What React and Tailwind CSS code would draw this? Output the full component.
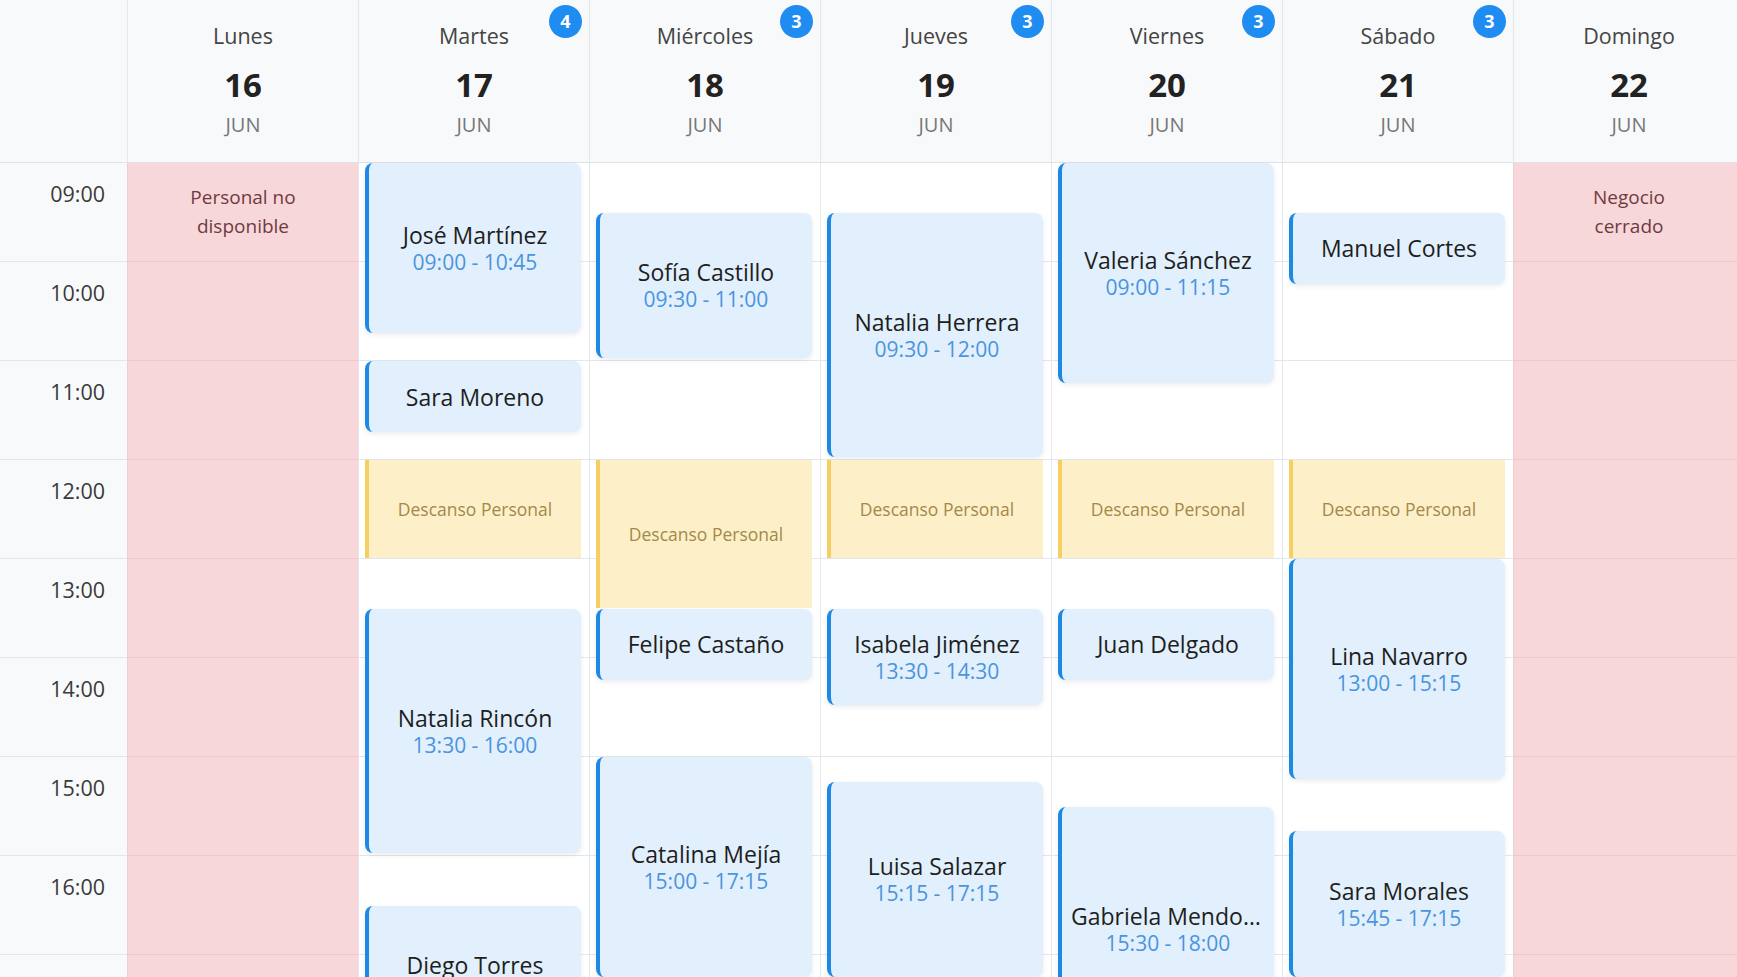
const HOUR = 99;
const HOURS = ['09:00', '10:00', '11:00', '12:00', '13:00', '14:00', '15:00', '16:00', '17:00', '18:00'];

const DAYS = [
  { name: 'Lunes', num: 16, closed: 'Personal no disponible' },
  {
    name: 'Martes', num: 17, count: 4,
    items: [
      { who: 'José Martínez', from: 9, to: 10.75 },
      { who: 'Sara Moreno', from: 11, to: 11.75 },
      { brk: true, from: 12, to: 13 },
      { who: 'Natalia Rincón', from: 13.5, to: 16 },
      { who: 'Diego Torres', from: 16.5, to: 18 },
    ],
  },
  {
    name: 'Miércoles', num: 18, count: 3,
    items: [
      { who: 'Sofía Castillo', from: 9.5, to: 11 },
      { brk: true, from: 12, to: 13.5 },
      { who: 'Felipe Castaño', from: 13.5, to: 14.25 },
      { who: 'Catalina Mejía', from: 15, to: 17.25 },
    ],
  },
  {
    name: 'Jueves', num: 19, count: 3,
    items: [
      { who: 'Natalia Herrera', from: 9.5, to: 12 },
      { brk: true, from: 12, to: 13 },
      { who: 'Isabela Jiménez', from: 13.5, to: 14.5 },
      { who: 'Luisa Salazar', from: 15.25, to: 17.25 },
    ],
  },
  {
    name: 'Viernes', num: 20, count: 3,
    items: [
      { who: 'Valeria Sánchez', from: 9, to: 11.25 },
      { brk: true, from: 12, to: 13 },
      { who: 'Juan Delgado', from: 13.5, to: 14.25 },
      { who: 'Gabriela Mendoza', from: 15.5, to: 18 },
    ],
  },
  {
    name: 'Sábado', num: 21, count: 3,
    items: [
      { who: 'Manuel Cortes', from: 9.5, to: 10.25 },
      { brk: true, from: 12, to: 13 },
      { who: 'Lina Navarro', from: 13, to: 15.25 },
      { who: 'Sara Morales', from: 15.75, to: 17.25 },
    ],
  },
  { name: 'Domingo', num: 22, closed: 'Negocio cerrado' },
];

const fmt = (h) => {
  const hh = Math.floor(h);
  const mm = Math.round((h - hh) * 60);
  return `${String(hh).padStart(2, '0')}:${String(mm).padStart(2, '0')}`;
};

function DayHeader({ day }) {
  return (
    <div className="relative flex flex-col items-center pt-[21px] border-l border-[#e3e6ea]">
      <div className="text-[21.5px] leading-[30px] text-[#444]">{day.name}</div>
      <div className="mt-[13px] text-[33px] leading-[42px] font-bold text-[#222]">{day.num}</div>
      <div className="mt-[6px] text-[20px] leading-[26px] text-[#777]">JUN</div>
      {day.count && (
        <span className="absolute top-[5px] right-[7px] w-[33px] h-[33px] rounded-full bg-[#1e8cf0] text-white text-[18px] font-bold flex items-center justify-center">
          {day.count}
        </span>
      )}
    </div>
  );
}

function Item({ it }) {
  const top = (it.from - 9) * HOUR;
  if (it.brk) {
    return (
      <div
        className="absolute left-[6px] right-[8px] flex items-center justify-center bg-[#fdefc6]/95 border-l-4 border-[#f6cf62] text-[17.5px] text-[#a3884a]"
        style={{ top, height: (it.to - it.from) * HOUR - 1 }}
      >
        Descanso Personal
      </div>
    );
  }
  const short = it.to - it.from < 1;
  const long = it.who.length > 15;
  return (
    <div
      className="absolute left-[6px] right-[8px] flex flex-col items-center justify-center px-[9px] rounded-lg border-l-4 border-[#1e88e5] bg-[#e1f0fc] shadow-[0_2px_5px_rgba(0,0,0,0.08)]"
      style={{ top, height: (it.to - it.from) * HOUR - 3 }}
    >
      <div className={`text-center text-[23px] leading-[28px] font-medium text-[#1e1e1e] ${long ? 'w-full truncate' : 'whitespace-nowrap'}`}>
        {it.who}
      </div>
      {!short && (
        <div className="text-[21px] leading-[26px] text-[#4a94e0]">
          {fmt(it.from)} - {fmt(it.to)}
        </div>
      )}
    </div>
  );
}

function DayColumn({ day }) {
  const closed = !!day.closed;
  return (
    <div className={`relative border-l ${closed ? 'bg-[#f8d7da] border-[#eccfd3]' : 'bg-white border-[#e3e6ea]'}`}>
      {HOURS.map((h) => (
        <div key={h} className={`h-[99px] border-b ${closed ? 'border-[#f0c6ca]' : 'border-[#e3e6ea]'}`} />
      ))}
      {closed && (
        <div className="absolute top-[20px] left-0 right-0 flex justify-center">
          <div className="max-w-[130px] text-center text-[19px] leading-[29px] font-medium text-[#6f3b3e]">{day.closed}</div>
        </div>
      )}
      {day.items?.map((it, i) => <Item key={i} it={it} />)}
    </div>
  );
}

export default function App() {
  return (
    <div className="h-screen w-screen overflow-hidden bg-white font-['Open_Sans',sans-serif]">
      <div className="w-[1744px]">
        <div className="grid grid-cols-[127px_repeat(7,231px)] h-[163px] bg-[#f8f9fa] border-b border-[#dfe3e7]">
          <div />
          {DAYS.map((d) => (
            <DayHeader key={d.name} day={d} />
          ))}
        </div>
        <div className="grid grid-cols-[127px_repeat(7,231px)]">
          <div className="bg-[#f8f9fa]">
            {HOURS.map((h) => (
              <div key={h} className="h-[99px] border-b border-[#e3e6ea] pt-[17px] pr-[22px] text-right text-[21.5px] leading-[28px] text-[#3a3a3a]">
                {h}
              </div>
            ))}
          </div>
          {DAYS.map((d) => (
            <DayColumn key={d.name} day={d} />
          ))}
        </div>
      </div>
    </div>
  );
}
